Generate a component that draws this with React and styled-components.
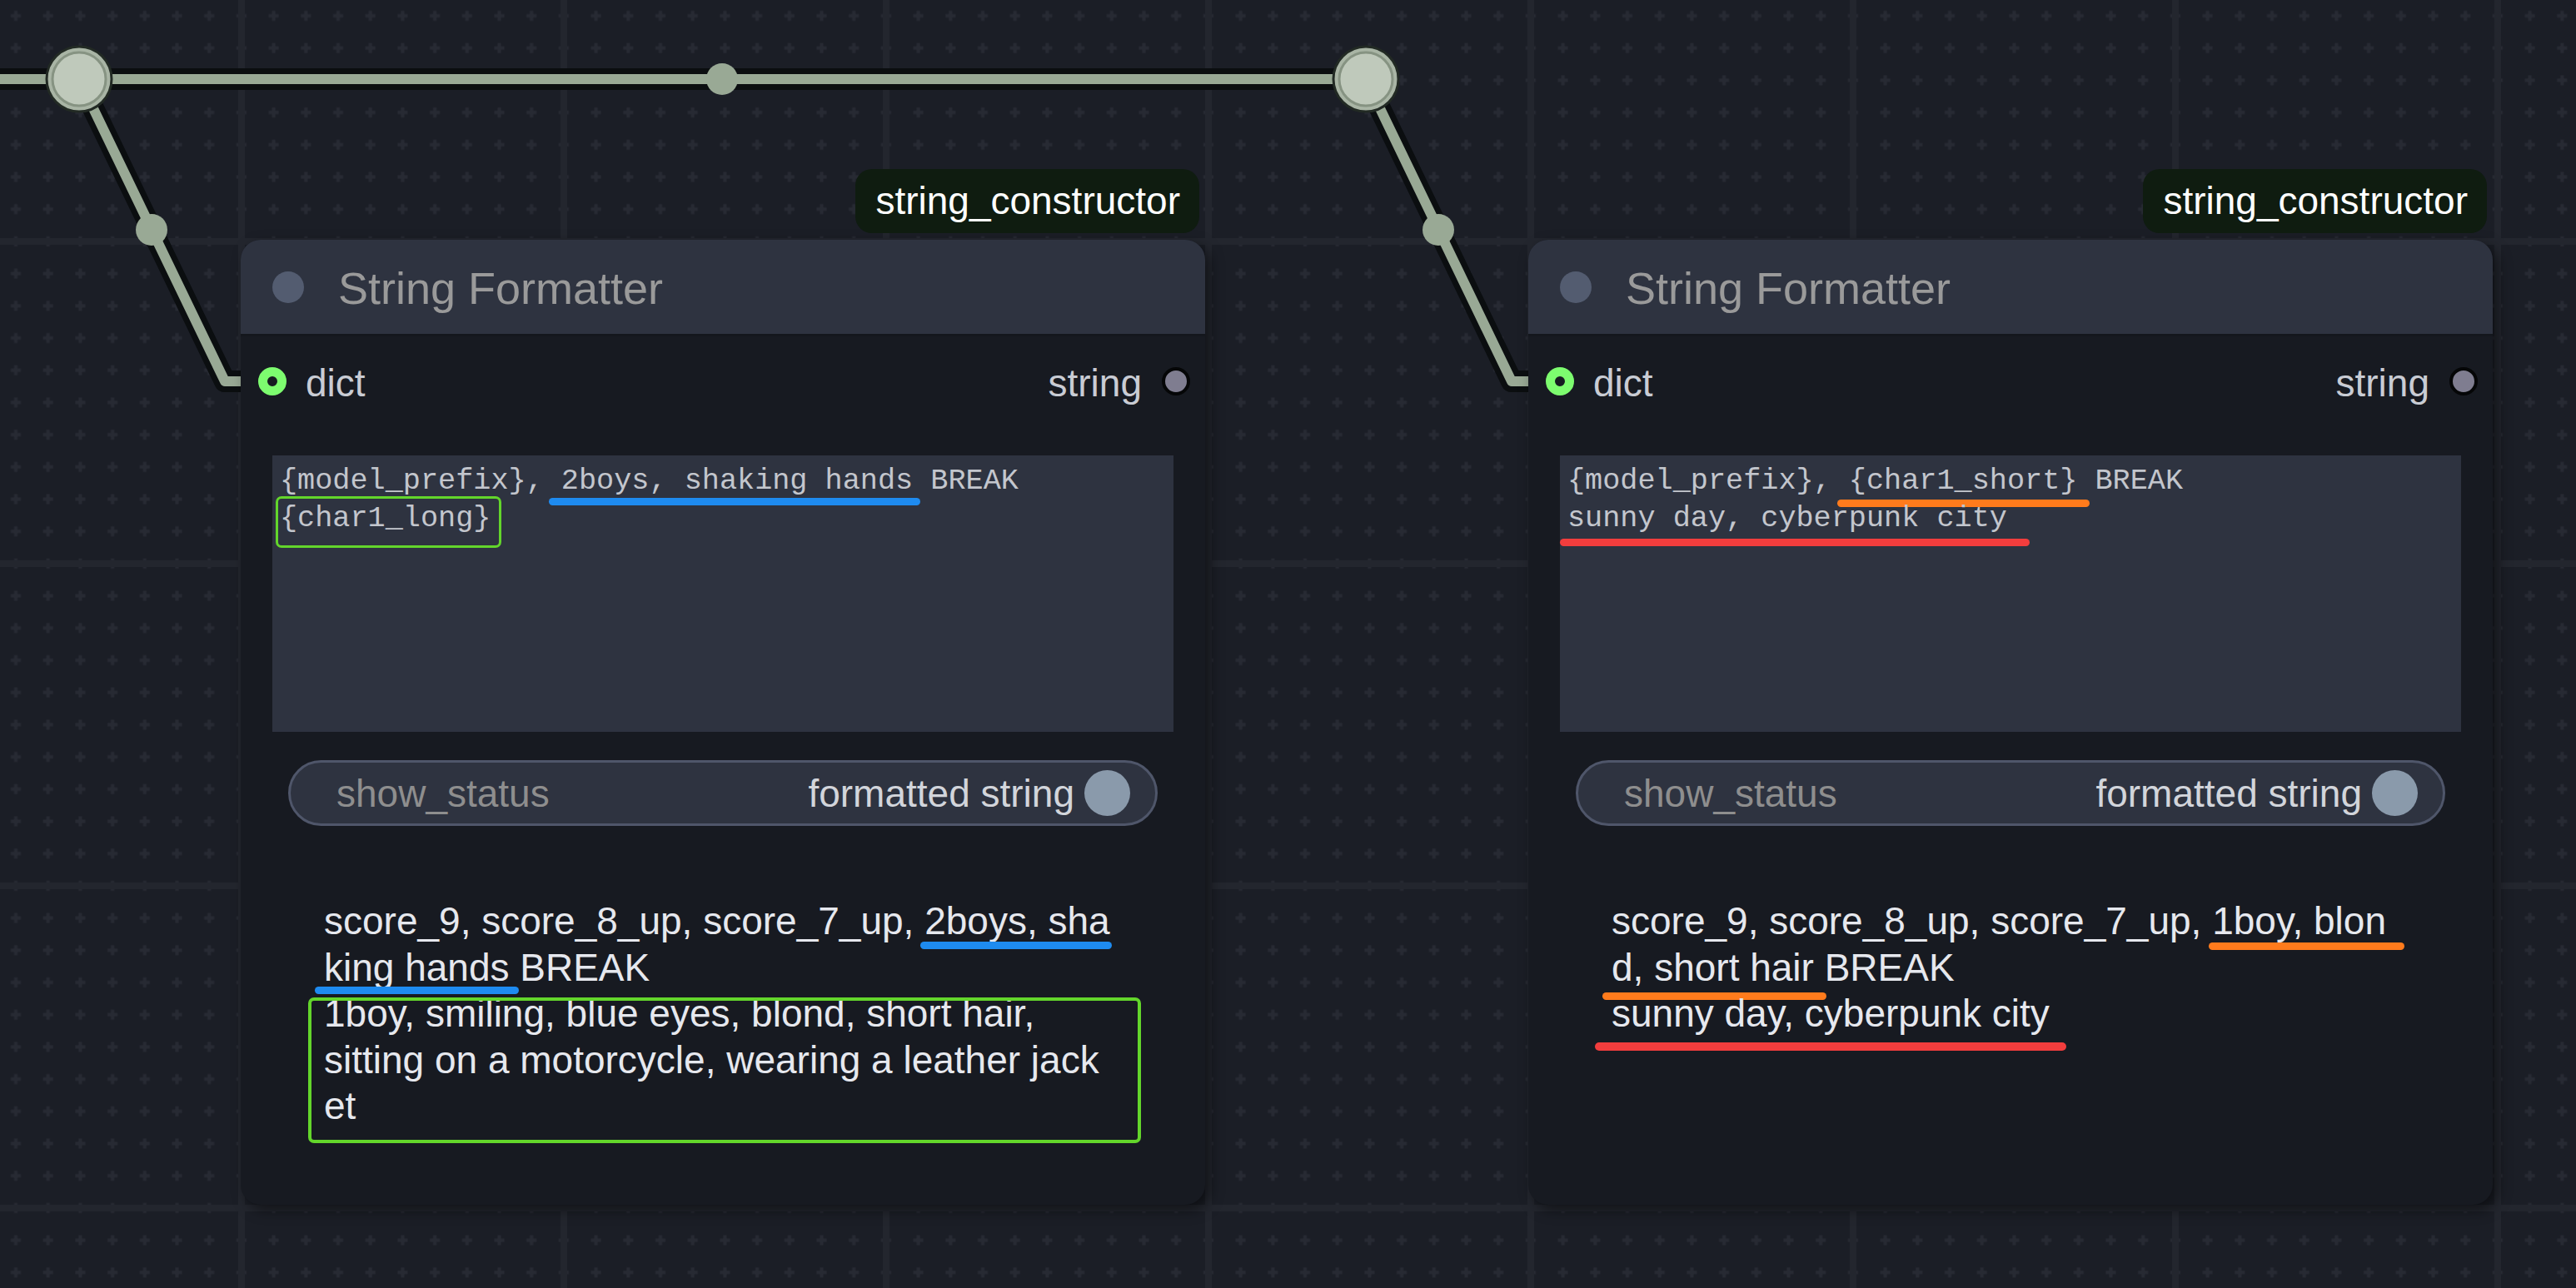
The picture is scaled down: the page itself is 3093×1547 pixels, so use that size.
import React from "react";
import styled, { createGlobalStyle } from "styled-components";

const GlobalStyle = createGlobalStyle`
  html, body {
    margin: 0;
    padding: 0;
    background: #1b1e26;
    overflow: hidden;
  }
  #root {
    width: 3093px;
    height: 1547px;
  }
`;

const Canvas = styled.div`
  position: relative;
  width: 3093px;
  height: 1547px;
  overflow: hidden;
  background: #1b1e26;
  font-family: "Liberation Sans", Arial, sans-serif;
`;

const Backdrop = styled.svg`
  position: absolute;
  left: 0;
  top: 0;
`;

const Node = styled.div`
  position: absolute;
  left: ${({ $x }) => $x}px;
  top: ${({ $y }) => $y}px;
  width: 1158px;
  height: 1159px;
  background: #171a21;
  border-radius: 24px;
  box-shadow: 6px 6px 16px rgba(0, 0, 0, 0.5);
  display: flex;
  flex-direction: column;
`;

const Badge = styled.div`
  position: absolute;
  top: -85px;
  right: 7px;
  height: 77px;
  line-height: 77px;
  padding: 0 23px 0 24px;
  background: #0f1c10;
  border-radius: 20px;
  color: #ffffff;
  font-size: 46px;
  white-space: nowrap;
`;

const TitleBar = styled.div`
  box-sizing: border-box;
  height: 116px;
  display: flex;
  align-items: center;
  gap: 41px;
  padding-left: 38px;
  background: #2e3340;
  border-radius: 24px 24px 0 0;
  border-bottom: 3px solid #14171d;
`;

const TitleDot = styled.div`
  width: 38px;
  height: 38px;
  border-radius: 50%;
  background: #535c70;
`;

const Title = styled.div`
  font-size: 54px;
  color: #9a9a9a;
  padding-top: 3px;
`;

const SlotRow = styled.div`
  margin-top: 24px;
  height: 60px;
  display: flex;
  align-items: center;
  justify-content: space-between;
  padding: 0 18px 0 21px;
`;

const Slot = styled.div`
  display: flex;
  align-items: center;
  gap: ${({ $gap }) => $gap}px;
  font-size: 46px;
  color: #c9ccd4;
  span {
    padding-top: 4px;
  }
`;

const InputRing = styled.div`
  box-sizing: border-box;
  width: 34px;
  height: 34px;
  border-radius: 50%;
  border: 11.5px solid #7dfc6f;
  background: #171a21;
`;

const OutputDot = styled.div`
  box-sizing: border-box;
  width: 34px;
  height: 34px;
  border-radius: 50%;
  border: 4px solid #050607;
  background: #7f7d90;
`;

const TextBox = styled.div`
  box-sizing: border-box;
  margin: 59px 38px 0;
  height: 332px;
  padding: 9px 9px 0;
  background: #2e3340;
  font-family: "Liberation Mono", "DejaVu Sans Mono", monospace;
  font-size: 35.2px;
  line-height: 45px;
  color: #c3c6cd;
`;

const Line = styled.div`
  white-space: pre;
`;

const Toggle = styled.div`
  box-sizing: border-box;
  margin: 34px 57px 0;
  height: 79px;
  display: flex;
  align-items: center;
  padding: 0 30px 0 55px;
  border: 3px solid #4f566a;
  border-radius: 40px;
  background: #2e3340;
  font-size: 46px;
`;

const ToggleLabel = styled.span`
  flex: 1;
  color: #8e8e8e;
`;

const ToggleValue = styled.span`
  color: #d2d5db;
  margin-right: 12px;
`;

const Knob = styled.div`
  width: 55px;
  height: 55px;
  border-radius: 50%;
  background: #8a9aab;
`;

const Output = styled.div`
  margin: 87px 0 0 100px;
  width: 958px;
  font-size: 46px;
  line-height: 55.5px;
  color: #e6e8ee;
`;

const Mark = styled.span`
  position: relative;
  &::after {
    content: "";
    position: absolute;
    left: ${({ $l }) => -$l}px;
    right: ${({ $r }) => -$r}px;
    bottom: ${({ $drop }) => -$drop}px;
    height: ${({ $h }) => $h || 9}px;
    border-radius: 5px;
    background: ${({ $color }) => $color};
  }
`;

const Framed = styled.span`
  position: relative;
  display: ${({ $block }) => ($block ? "block" : "inline")};
  &::after {
    content: "";
    position: absolute;
    top: ${({ $t }) => $t}px;
    left: ${({ $l }) => -$l}px;
    right: ${({ $r }) => -$r}px;
    bottom: ${({ $b }) => -$b}px;
    border: ${({ $w }) => $w}px solid #63d62b;
    border-radius: 7px;
  }
`;

const BLUE = "#1e8bf0";
const ORANGE = "#ff7b1c";
const RED = "#f23d3d";

const gridLines = [-97, 290, 677, 1064, 1451, 1838, 2225, 2612, 2999];

const Reroute = ({ x, y }) => (
  <g>
    <circle cx={x} cy={y} r="39" fill="#a9b5a5" stroke="#222a24" strokeWidth="3" />
    <circle cx={x} cy={y} r="32" fill="#bfc9bb" stroke="#869382" strokeWidth="3" />
  </g>
);

const Links = () => {
  const wires = [
    "M -30 95 L 95 95",
    "M 95 95 L 1640 95",
    "M 95 95 L 270 458 L 330 458",
    "M 1640 95 L 1815 458 L 1880 458",
  ];
  return (
    <Backdrop width="3093" height="1547">
      <defs>
        <pattern
          id="plus"
          width="38.7"
          height="38.7"
          x="-0.35"
          y="-0.35"
          patternUnits="userSpaceOnUse"
        >
          <rect x="13.35" y="17.35" width="12" height="4" fill="#272a33" />
          <rect x="17.35" y="13.35" width="4" height="12" fill="#272a33" />
        </pattern>
      </defs>
      <rect width="3093" height="1547" fill="url(#plus)" />
      {gridLines.map((v) => (
        <rect key={"v" + v} x={v - 4} y="0" width="8" height="1547" fill="#23262e" />
      ))}
      {gridLines.slice(0, 5).map((v) => (
        <rect key={"h" + v} x="0" y={v - 4} width="3093" height="8" fill="#23262e" />
      ))}
      {wires.map((d) => (
        <path key={"b" + d} d={d} fill="none" stroke="#0b0e10" strokeWidth="26" strokeLinejoin="round" />
      ))}
      {wires.map((d) => (
        <path key={"l" + d} d={d} fill="none" stroke="#99a995" strokeWidth="12" strokeLinejoin="round" />
      ))}
      <circle cx="867" cy="95" r="19" fill="#99a995" />
      <circle cx="182" cy="276" r="19" fill="#99a995" />
      <circle cx="1727" cy="276" r="19" fill="#99a995" />
      <Reroute x={95} y={95} />
      <Reroute x={1640} y={95} />
    </Backdrop>
  );
};

const FormatterNode = ({ x, template, output }) => (
  <Node $x={x} $y={288}>
    <Badge>string_constructor</Badge>
    <TitleBar>
      <TitleDot />
      <Title>String Formatter</Title>
    </TitleBar>
    <SlotRow>
      <Slot $gap={23}>
        <InputRing />
        <span>dict</span>
      </Slot>
      <Slot $gap={24}>
        <span>string</span>
        <OutputDot />
      </Slot>
    </SlotRow>
    <TextBox>{template}</TextBox>
    <Toggle>
      <ToggleLabel>show_status</ToggleLabel>
      <ToggleValue>formatted string</ToggleValue>
      <Knob />
    </Toggle>
    <Output>{output}</Output>
  </Node>
);

export default function App() {
  return (
    <>
      <GlobalStyle />
      <Canvas>
        <Links />
        <FormatterNode
          x={289}
          template={
            <>
              <Line>
                {"{model_prefix},"}
                <Mark $color={BLUE} $l={-6} $r={9} $drop={8.5}>
                  {" 2boys, shaking hands"}
                </Mark>
                {" BREAK"}
              </Line>
              <Line>
                <Framed $t={-7} $l={5} $r={13} $b={14.5} $w={3.5}>
                  {"{char1_long}"}
                </Framed>
              </Line>
            </>
          }
          output={
            <>
              <Line>
                {"score_9, score_8_up, score_7_up, "}
                <Mark $color={BLUE} $l={5} $r={2} $drop={8.25}>
                  2boys, sha
                </Mark>
              </Line>
              <Line>
                <Mark $color={BLUE} $l={11} $r={11} $drop={6.25}>
                  king hands
                </Mark>
                {" BREAK"}
              </Line>
              <Framed $block $t={8} $l={19} $r={23} $b={16.5} $w={4}>
                <Line>1boy, smiling, blue eyes, blond, short hair,</Line>
                <Line>sitting on a motorcycle, wearing a leather jack</Line>
                <Line>et</Line>
              </Framed>
            </>
          }
        />
        <FormatterNode
          x={1835}
          template={
            <>
              <Line>
                {"{model_prefix}, "}
                <Mark $color={ORANGE} $l={14} $r={15} $drop={10.5}>
                  {"{char1_short}"}
                </Mark>
                {" BREAK"}
              </Line>
              <Line>
                <Mark $color={RED} $l={9} $r={27} $drop={12.5}>
                  sunny day, cyberpunk city
                </Mark>
              </Line>
            </>
          }
          output={
            <>
              <Line>
                {"score_9, score_8_up, score_7_up, "}
                <Mark $color={ORANGE} $l={4} $r={22} $drop={9.25}>
                  1boy, blon
                </Mark>
              </Line>
              <Line>
                <Mark $color={ORANGE} $l={11} $r={15} $drop={13.25}>
                  d, short hair
                </Mark>
                {" BREAK"}
              </Line>
              <Line>
                <Mark $color={RED} $l={20} $r={20} $drop={19.25} $h={10}>
                  sunny day, cyberpunk city
                </Mark>
              </Line>
            </>
          }
        />
      </Canvas>
    </>
  );
}
